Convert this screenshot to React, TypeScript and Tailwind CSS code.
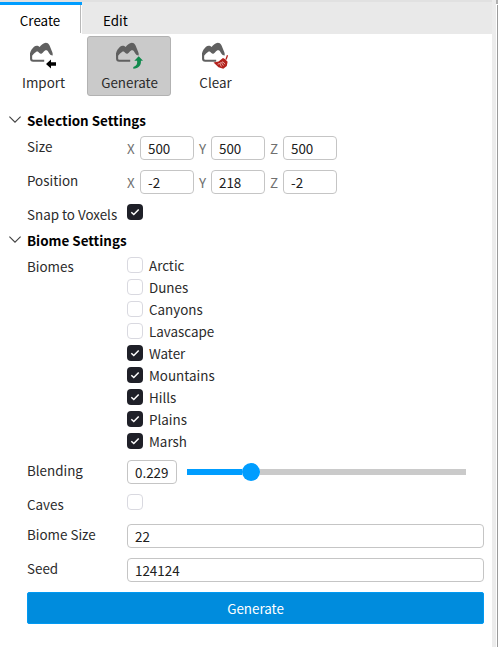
import type { ReactNode } from "react";

function Mountain({ children }: { children: ReactNode }) {
  return (
    <svg width="30" height="30" viewBox="0 0 30 30" fill="none" className="block">
      <path d="M16.2 20.8H5.2Q3.1 20.8 3.1 18.8V13" stroke="#606060" strokeWidth="2.1" />
      <path
        d="M2 16V13.4C2.3 11 4.2 8.4 6 6.7C7.8 5.3 10.2 5.4 11.6 7.1C13.2 5 15.4 2.7 17.9 2.7C20.9 2.7 22 6 22.9 8.7C23.8 11.2 25 12.6 24.7 15.5L22.6 14.9C20.9 13.9 20.3 11.4 19.2 10.6C18 9.7 16.8 10.2 15.4 12C14 13.8 12.6 14.4 11.4 13C10.4 11.8 9.4 10.9 8 12C6.5 13.1 5.6 13.9 4.2 15.4Z"
        fill="#606060"
      />
      {children}
    </svg>
  );
}

function Check({ on = false }: { on?: boolean }) {
  return (
    <span
      className={
        on
          ? "flex size-4 shrink-0 items-center justify-center rounded-[4px] bg-[#1f2028]"
          : "block size-4 shrink-0 rounded-[4px] border border-[#d9d9e0] bg-white"
      }
    >
      {on && (
        <svg width="16" height="16" viewBox="0 0 16 16" fill="none">
          <path d="M4.3 8.2L6.8 10.5L11.7 5.5" stroke="white" strokeWidth="1.5" />
        </svg>
      )}
    </span>
  );
}

function Field({ value, className }: { value: string; className: string }) {
  return (
    <div
      className={`h-6 rounded-[4px] border border-[#c5c5c5] bg-white pl-[7px] leading-[23px] text-[#202020] ${className}`}
    >
      {value}
    </div>
  );
}

function Row({
  label,
  className,
  labelClass = "leading-[21px]",
  children,
}: {
  label: string;
  className: string;
  labelClass?: string;
  children: ReactNode;
}) {
  return (
    <div className={`flex pl-[27px] ${className}`}>
      <div className={`h-6 w-[100px] shrink-0 whitespace-nowrap ${labelClass}`}>{label}</div>
      {children}
    </div>
  );
}

function Heading({ className = "", children }: { className?: string; children: ReactNode }) {
  return (
    <div className="flex h-6 items-center pl-[9px] font-bold text-black">
      <svg width="12" height="8" viewBox="0 0 12 8" fill="none" className="mr-[6px] block">
        <path d="M0.4 0.6L6 6.2L11.6 0.6" stroke="#404040" strokeWidth="1.1" />
      </svg>
      <span className={className}>{children}</span>
    </div>
  );
}

function Vector({ values }: { values: string[] }) {
  return (
    <div className="flex gap-[5px]">
      {["X", "Y", "Z"].map((axis, i) => (
        <div key={axis} className="flex">
          <span className={`leading-[25px] text-[#707070] ${i === 1 ? "w-3" : "w-[13px]"}`}>{axis}</span>
          <Field value={values[i]} className="w-[54px]" />
        </div>
      ))}
    </div>
  );
}

const biomes: [string, boolean][] = [
  ["Arctic", false],
  ["Dunes", false],
  ["Canyons", false],
  ["Lavascape", false],
  ["Water", true],
  ["Mountains", true],
  ["Hills", true],
  ["Plains", true],
  ["Marsh", true],
];

function Tool({ label, active = false, children }: { label: string; active?: boolean; children: ReactNode }) {
  return (
    <div
      className={`flex h-[60px] w-[84px] flex-col items-center rounded-[3px] border pt-[3px] ${
        active ? "border-[#b2b2b2] bg-[#cacaca]" : "border-transparent"
      }`}
    >
      <Mountain>{children}</Mountain>
      <span className="mt-[2px] pl-px leading-[21px]">{label}</span>
    </div>
  );
}

export default function App() {
  return (
    <div className="flex h-[647px] w-[498px] overflow-hidden bg-white font-['Noto_Sans_CJK_SC','Noto_Sans',sans-serif] text-[13.4px] leading-[22px] text-[#2b2b2b]">
      <div className="w-[492px]">
        <div className="flex h-[34px] border-t-2 border-[#e1e1e1] bg-[#e9e9e9] text-black">
          <div className="h-8 w-[82px] border-t-[3px] border-[#009dff] bg-white">
            <div className="h-7 w-[81px] border-r border-[#b8b8b8] text-center leading-[31px]">Create</div>
          </div>
          <div className="pl-[21px] leading-[37px]">Edit</div>
        </div>
        <div className="flex gap-[2px] pt-[2px] pl-px">
          <Tool label="Import">
            <path d="M18 24L23 19.5V22.3H28V25.7H23V28.5Z" fill="#000" />
          </Tool>
          <Tool label="Generate" active>
            <path d="M19.3 28.7C24.8 28.4 27.3 25.5 26.9 20.8H29L24.7 16.2L20.3 20.8H23.1C23.6 24 22.4 26.2 19.3 27Z" fill="#108a4d" />
          </Tool>
          <Tool label="Clear">
            <path d="M27.5 15.3L26 19.5" stroke="#b3211b" strokeWidth="1.3" />
            <path d="M13.5 22.6L18.5 21.5L23 18L25.3 19.3L27.6 21.8L26.8 26L23.3 28.8L18.5 27.3Z" fill="#b3211b" />
            <path d="M17.7 24.2L19.7 23.4L21.4 26.6M20 23.2L21.4 22.6L23.4 25.6M21.8 22.4L23 21.8L25 24.2" stroke="#f3c9c5" strokeWidth="0.8" />
          </Tool>
        </div>

        <div className="pt-3">
          <Heading className="leading-6">Selection Settings</Heading>
        </div>
        <Row label="Size" className="mt-[4px] h-6">
          <Vector values={["500", "500", "500"]} />
        </Row>
        <Row label="Position" className="mt-[10px] h-6">
          <Vector values={["-2", "218", "-2"]} />
        </Row>
        <Row label="Snap to Voxels" className="mt-[10px] h-6">
          <Check on />
        </Row>
        <Heading>Biome Settings</Heading>
        <Row label="Biomes" className="mt-[5px] h-[198px]" labelClass="leading-[19px]">
          <div>
            {biomes.map(([name, on]) => (
              <div key={name} className="flex h-[22px] gap-[6px]">
                <Check on={on} />
                <span className="leading-[17px]">{name}</span>
              </div>
            ))}
          </div>
        </Row>
        <Row label="Blending" className="mt-[5px] h-6">
          <Field value="0.229" className="w-[50px]" />
          <div className="ml-[10px] flex h-6 w-[279px] items-center">
            <div className="h-[6px] w-[55px] bg-[#009dff]" />
            <div className="size-[18px] rounded-full bg-[#009dff]" />
            <div className="h-[6px] flex-1 bg-[#cacaca]" />
          </div>
        </Row>
        <Row label="Caves" className="mt-[10px] h-6">
          <Check />
        </Row>
        <Row label="Biome Size" className="mt-[6px] h-6">
          <Field value="22" className="w-[357px]" />
        </Row>
        <Row label="Seed" className="mt-[10px] h-6">
          <Field value="124124" className="w-[357px]" />
        </Row>
        <div className="mt-[10px] ml-[27px] flex h-8 w-[457px] items-center justify-center rounded-[2px] border border-[#0099f2] bg-[#008cdd] text-white">
          Generate
        </div>
      </div>
      <div className="w-[4px] bg-[#ececec]" />
      <div className="flex w-[2px] flex-col items-end">
        <div className="h-1 w-full bg-[#b0b0b0]" />
        <div className="h-px" />
        <div className="w-px flex-1 bg-[#9b9b9b]" />
      </div>
    </div>
  );
}
